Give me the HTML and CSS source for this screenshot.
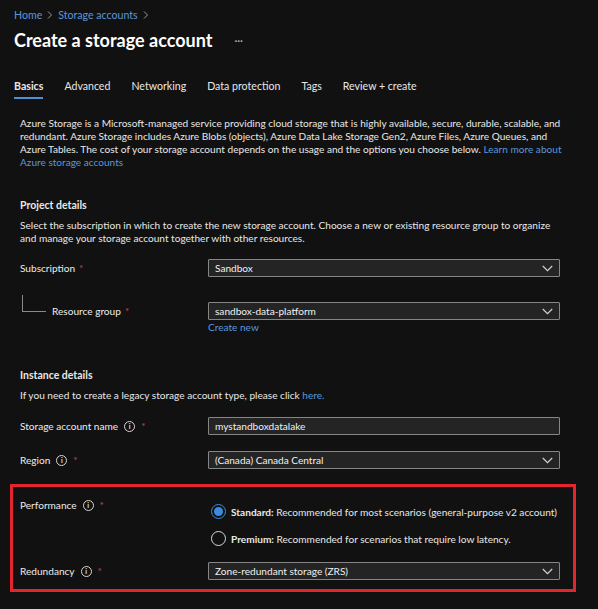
FILE: index.html
```html
<!DOCTYPE html>
<html lang="en">
<head>
<meta charset="utf-8">
<title>Create a storage account</title>
<link rel="stylesheet" href="styles.css">
</head>
<body>
<div class="page">
  <nav class="breadcrumb">
    <a class="crumb">Home</a>
    <span class="sep"><svg width="6" height="8" viewBox="0 0 6 8"><path d="M1 0.5 L4.5 4 L1 7.5" fill="none" stroke="#9a9a9a" stroke-width="1"/></svg></span>
    <a class="crumb">Storage accounts</a>
    <span class="sep"><svg width="6" height="8" viewBox="0 0 6 8"><path d="M1 0.5 L4.5 4 L1 7.5" fill="none" stroke="#9a9a9a" stroke-width="1"/></svg></span>
  </nav>
  <div class="title-row">
    <h1 class="title">Create a storage account</h1>
    <span class="more">···</span>
  </div>
  <div class="tabs">
    <span class="tab active">Basics</span>
    <span class="tab">Advanced</span>
    <span class="tab">Networking</span>
    <span class="tab">Data protection</span>
    <span class="tab">Tags</span>
    <span class="tab">Review + create</span>
  </div>

  <div class="content">
    <p class="desc">Azure Storage is a Microsoft-managed service providing cloud storage that is highly available, secure, durable, scalable, and redundant. Azure Storage includes Azure Blobs (objects), Azure Data Lake Storage Gen2, Azure Files, Azure Queues, and Azure Tables. The cost of your storage account depends on the usage and the options you choose below. <a class="link">Learn more about Azure storage accounts</a></p>

    <h2 class="section-title project">Project details</h2>
    <p class="section-text">Select the subscription in which to create the new storage account. Choose a new or existing resource group to organize and manage your storage account together with other resources.</p>

    <div class="row row-sub">
      <div class="label">Subscription <span class="req">*</span></div>
      <div class="control">
        <div class="select"><span>Sandbox</span><svg class="chev" width="11" height="7" viewBox="0 0 11 7"><path d="M0.8 1 L5.5 5.7 L10.2 1" fill="none" stroke="#d0d0d0" stroke-width="1.2"/></svg></div>
      </div>
    </div>

    <div class="row row-rg">
      <div class="label rg-label"><span class="tree"></span>Resource group <span class="req">*</span></div>
      <div class="control">
        <div class="select"><span>sandbox-data-platform</span><svg class="chev" width="11" height="7" viewBox="0 0 11 7"><path d="M0.8 1 L5.5 5.7 L10.2 1" fill="none" stroke="#d0d0d0" stroke-width="1.2"/></svg></div>
        <a class="link create">Create new</a>
      </div>
    </div>

    <h2 class="section-title instance">Instance details</h2>
    <p class="section-text">If you need to create a legacy storage account type, please click <a class="link">here.</a></p>

    <div class="row row-san">
      <div class="label">Storage account name <span class="info">i</span> <span class="req">*</span></div>
      <div class="control">
        <div class="select"><span>mystandboxdatalake</span></div>
      </div>
    </div>

    <div class="row row-region">
      <div class="label">Region <span class="info">i</span> <span class="req">*</span></div>
      <div class="control">
        <div class="select"><span>(Canada) Canada Central</span><svg class="chev" width="11" height="7" viewBox="0 0 11 7"><path d="M0.8 1 L5.5 5.7 L10.2 1" fill="none" stroke="#d0d0d0" stroke-width="1.2"/></svg></div>
      </div>
    </div>

    <div class="highlight">
      <div class="row row-perf">
        <div class="label">Performance <span class="info">i</span> <span class="req">*</span></div>
        <div class="control radios">
          <div class="radio-item"><span class="radio checked"></span><span class="radio-text"><b>Standard:</b> Recommended for most scenarios (general-purpose v2 account)</span></div>
          <div class="radio-item"><span class="radio"></span><span class="radio-text"><b>Premium:</b> Recommended for scenarios that require low latency.</span></div>
        </div>
      </div>
      <div class="row row-red">
        <div class="label">Redundancy <span class="info">i</span> <span class="req">*</span></div>
        <div class="control">
          <div class="select"><span>Zone-redundant storage (ZRS)</span><svg class="chev" width="11" height="7" viewBox="0 0 11 7"><path d="M0.8 1 L5.5 5.7 L10.2 1" fill="none" stroke="#d0d0d0" stroke-width="1.2"/></svg></div>
        </div>
      </div>
    </div>
  </div>
</div>
</body>
</html>
```
FILE: styles.css
```css
* { box-sizing: border-box; }
html, body {
  margin: 0;
  padding: 0;
  background: #111111;
}
body {
  font-family: "Segoe UI", Lato, "Liberation Sans", Arial, sans-serif;
  font-size: 10.1px;
  color: #e8e8e8;
  height: 609px;
  overflow: hidden;
}
.page {
  padding: 0 14px;
}
.breadcrumb {
  display: flex;
  align-items: center;
  gap: 5px;
  padding-top: 8px;
  height: 22px;
  line-height: 14px;
  font-size: 10.6px;
}
.crumb { color: #5b97dc; }
.sep { display: flex; align-items: center; }
.title-row {
  display: flex;
  align-items: center;
  margin-top: 6px;
  height: 24px;
}
.title {
  margin: 0;
  font-size: 18px;
  font-weight: 700;
  color: #ffffff;
  line-height: 24px;
}
.more {
  margin-left: 22px;
  color: #bdbdbd;
  font-size: 11px;
}
.tabs {
  display: flex;
  gap: 21px;
  margin-top: 26px;
  line-height: 16px;
  font-size: 10.6px;
}
.tab {
  padding-bottom: 3px;
  border-bottom: 2px solid transparent;
  color: #e8e8e8;
}
.tab.active {
  font-weight: 700;
  border-bottom-color: #4f8fd6;
}
.content {
  padding-left: 6px;
  width: 552px;
}
.desc {
  margin: 18px 0 0;
  line-height: 13px;
}
.link { color: #5b97dc; }
.section-title {
  margin: 0;
  font-size: 10.5px;
  font-weight: 700;
  line-height: 16px;
}
.project { margin-top: 28px; }
.instance { margin-top: 33px; }
.section-text {
  margin: 6px 0 0;
  line-height: 13px;
}
.row {
  display: flex;
  align-items: flex-start;
}
.label {
  width: 188px;
  flex: none;
  display: flex;
  align-items: center;
  height: 18px;
  color: #ececec;
}
.req {
  color: #c8484b;
  margin-left: 4px;
  font-size: 10px;
}
.info {
  display: inline-flex;
  align-items: center;
  justify-content: center;
  width: 11px;
  height: 11px;
  border: 1px solid #d6d6d6;
  border-radius: 50%;
  font-size: 7px;
  font-weight: 700;
  line-height: 1;
  margin-left: 6px;
  margin-right: 6px;
  color: #e0e0e0;
}
.info + .req { margin-left: 0; }
.control {
  width: 352px;
  flex: none;
}
.select {
  height: 18px;
  background: #242424;
  border: 1px solid #858585;
  border-radius: 1px;
  display: flex;
  align-items: center;
  justify-content: space-between;
  padding: 0 6px 0 6px;
  color: #f0f0f0;
}
.chev { flex: none; }
.row-sub { margin-top: 14px; }
.row-rg { margin-top: 25px; }
.rg-label {
  position: relative;
  padding-left: 32px;
}
.tree {
  position: absolute;
  left: 2px;
  top: -7px;
  width: 24px;
  height: 17px;
  border-left: 1px solid #8a8a8a;
  border-bottom: 1px solid #8a8a8a;
}
.create {
  display: block;
  line-height: 13px;
  margin-top: 1px;
}
.row-san { margin-top: 15px; }
.row-region { margin-top: 16px; }
.highlight {
  margin: 15px 0 0 -10px;
  width: 566px;
  border: 3px solid #e3252e;
  padding: 0 13px 9px 7px;
}
.row-perf { margin-top: 9px; }
.radios {
  display: flex;
  flex-direction: column;
  gap: 12px;
  padding-top: 8px;
}
.radio-item {
  display: flex;
  align-items: center;
  gap: 5px;
  height: 15px;
  padding-left: 3px;
}
.radio-text { white-space: nowrap; }
.radio {
  width: 15px;
  height: 15px;
  border: 1px solid #d8d8d8;
  border-radius: 50%;
  flex: none;
  display: inline-flex;
  align-items: center;
  justify-content: center;
}
.radio.checked {
  border-color: #3b8be0;
}
.radio.checked::after {
  content: "";
  width: 9px;
  height: 9px;
  border-radius: 50%;
  background: #3b8be0;
}
.row-red { margin-top: 16px; }
```
